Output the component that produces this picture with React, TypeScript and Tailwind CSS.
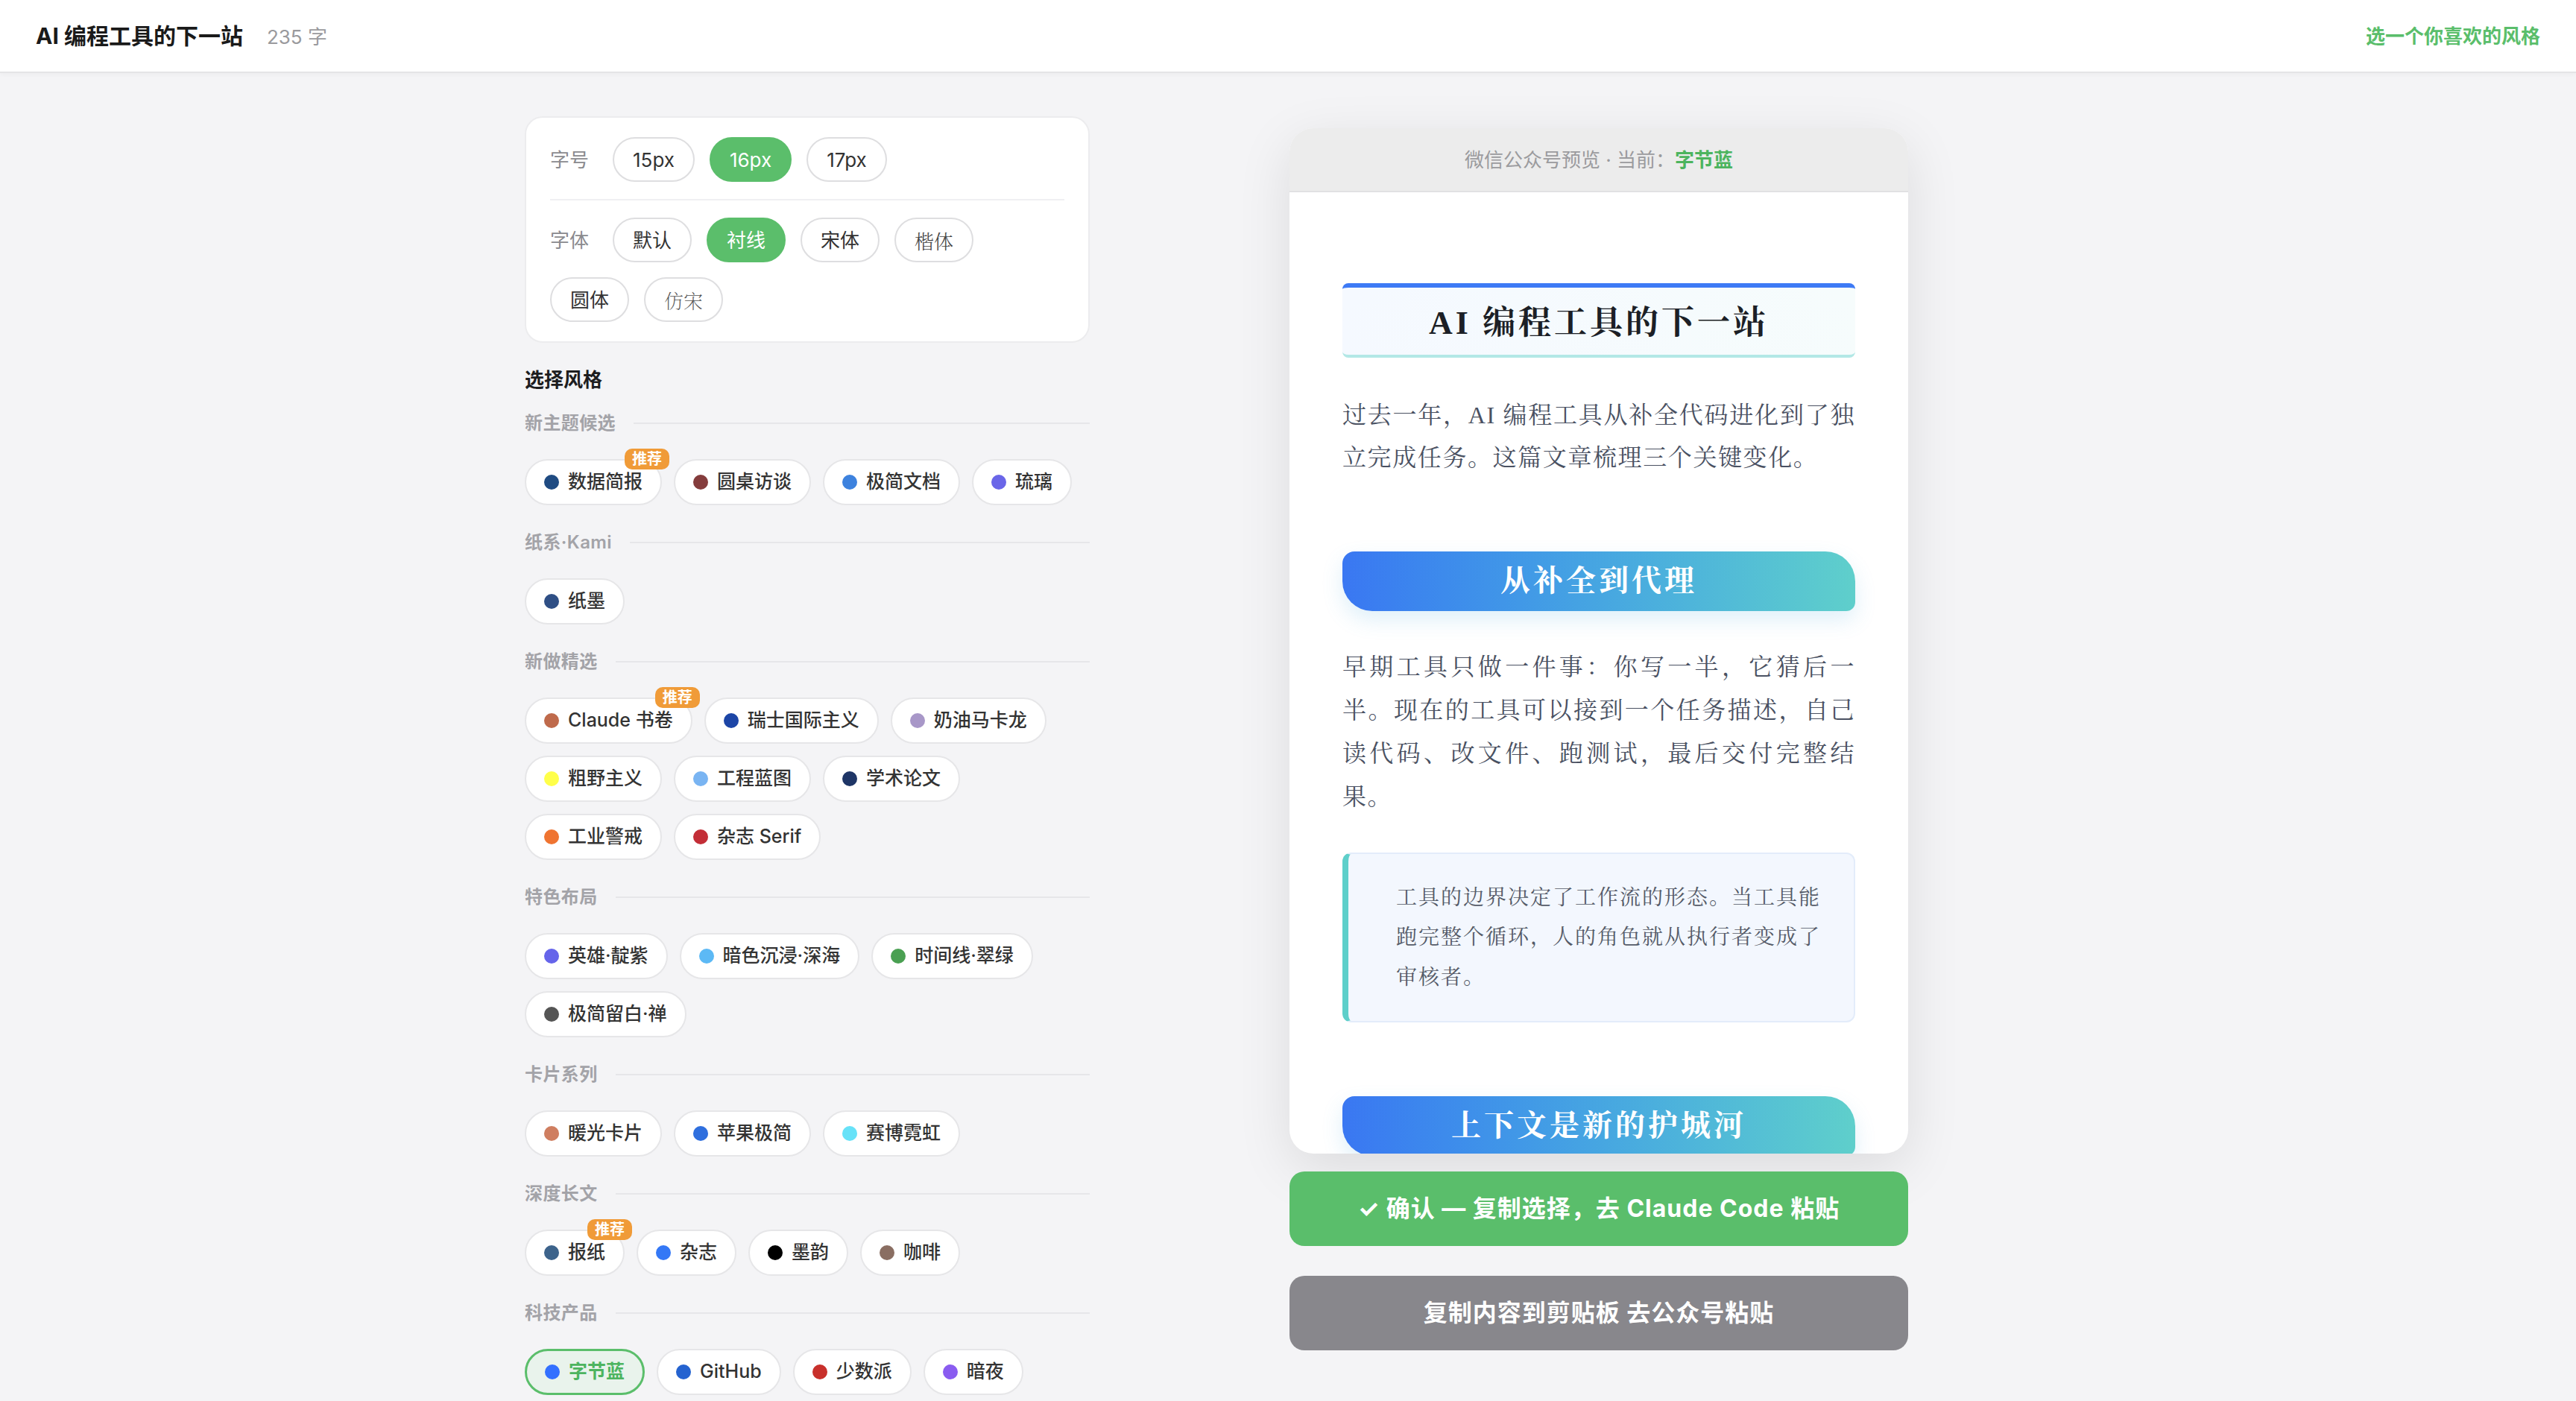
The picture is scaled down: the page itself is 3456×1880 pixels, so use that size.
import clsx from "clsx";

type Theme = { name: string; dot: string; badge?: boolean; active?: boolean };
type Group = { title: string; items: Theme[] };

const groups: Group[] = [
  {
    title: "新主题候选",
    items: [
      { name: "数据简报", dot: "bg-[#1f4b82]", badge: true },
      { name: "圆桌访谈", dot: "bg-[#843c3c]" },
      { name: "极简文档", dot: "bg-[#3d82de]" },
      { name: "琉璃", dot: "bg-[#6a66e8]" },
    ],
  },
  { title: "纸系·Kami", items: [{ name: "纸墨", dot: "bg-[#2f4f85]" }] },
  {
    title: "新做精选",
    items: [
      { name: "Claude 书卷", dot: "bg-[#bf6a4b]", badge: true },
      { name: "瑞士国际主义", dot: "bg-[#1c45a6]" },
      { name: "奶油马卡龙", dot: "bg-[#a897c8]" },
      { name: "粗野主义", dot: "bg-[#ffff4a]" },
      { name: "工程蓝图", dot: "bg-[#79b4f2]" },
      { name: "学术论文", dot: "bg-[#1e3566]" },
      { name: "工业警戒", dot: "bg-[#ef7431]" },
      { name: "杂志 Serif", dot: "bg-[#c32e37]" },
    ],
  },
  {
    title: "特色布局",
    items: [
      { name: "英雄·靛紫", dot: "bg-[#6564ea]" },
      { name: "暗色沉浸·深海", dot: "bg-[#5cb9f5]" },
      { name: "时间线·翠绿", dot: "bg-[#4aa052]" },
      { name: "极简留白·禅", dot: "bg-[#555555]" },
    ],
  },
  {
    title: "卡片系列",
    items: [
      { name: "暖光卡片", dot: "bg-[#cf7e60]" },
      { name: "苹果极简", dot: "bg-[#2f6fde]" },
      { name: "赛博霓虹", dot: "bg-[#67e2f8]" },
    ],
  },
  {
    title: "深度长文",
    items: [
      { name: "报纸", dot: "bg-[#3d638b]", badge: true },
      { name: "杂志", dot: "bg-[#3478f6]" },
      { name: "墨韵", dot: "bg-[#000000]" },
      { name: "咖啡", dot: "bg-[#8a6e62]" },
    ],
  },
  {
    title: "科技产品",
    items: [
      { name: "字节蓝", dot: "bg-[#3370ff]", active: true },
      { name: "GitHub", dot: "bg-[#2563d0]" },
      { name: "少数派", dot: "bg-[#c8302b]" },
      { name: "暗夜", dot: "bg-[#8a5cf0]" },
    ],
  },
];

const sans = "font-['Inter','Noto_Sans_CJK_SC',sans-serif]";
const serif = "font-['Liberation_Serif','Noto_Serif_CJK_SC','Noto_Serif_SC','Noto_Sans_CJK_SC',serif]";

// 字号 / 字体 用的小药丸。楷体・仿宋は書体見本として細めの明朝に
function OptionPill({ label, active, face }: { label: string; active?: boolean; face?: "kai" | "fang" }) {
  return (
    <span
      className={clsx(
        "inline-flex h-[30px] items-center rounded-full border px-[12.5px] text-[13px]",
        active ? "border-[#5bbe6b] bg-[#5bbe6b] text-white" : "border-[#dedee0] bg-white text-[#333]",
        face === "kai" && "font-['AR_PL_UKai_CN','KaiTi','Noto_Serif_CJK_SC',serif] font-light text-[#444]",
        face === "fang" && "font-['FangSong','AR_PL_UMing_CN','Noto_Serif_CJK_SC',serif] text-[12px] font-extralight text-[#555]",
      )}
    >
      {label}
    </span>
  );
}

function ThemePill({ t }: { t: Theme }) {
  return (
    <span
      className={clsx(
        "relative inline-flex h-[31px] items-center gap-1.5 rounded-full px-3 text-[12.5px]",
        t.active
          ? "border-[1.5px] border-[#5bbe6b] bg-[#e9f3ec] font-semibold text-[#4db45f]"
          : "border border-[#e6e6e8] bg-white font-medium text-[#333]",
      )}
    >
      <span className={clsx("size-2.5 rounded-full", t.dot)} />
      {t.name}
      {t.badge && (
        <span className="absolute -right-1.5 -top-2 rounded-[5px] bg-[#f09b38] px-[5px] text-[10px] font-bold leading-[14px] text-white">
          推荐
        </span>
      )}
    </span>
  );
}

function SettingsCard() {
  return (
    <div className="rounded-xl border border-[#ececee] bg-white px-4 py-[13px]">
      <div className="flex flex-wrap items-center gap-x-2.5 gap-y-2.5">
        <span className="w-[32px] text-[13px] text-[#8a8a8e]">字号</span>
        <OptionPill label="15px" />
        <OptionPill label="16px" active />
        <OptionPill label="17px" />
      </div>
      <div className="my-[11.5px] h-px bg-[#f0f0f2]" />
      <div className="flex flex-wrap items-center gap-x-2.5 gap-y-2.5">
        <span className="w-[32px] text-[13px] text-[#8a8a8e]">字体</span>
        <OptionPill label="默认" />
        <OptionPill label="衬线" active />
        <OptionPill label="宋体" />
        <OptionPill label="楷体" face="kai" />
        <OptionPill label="圆体" />
        <OptionPill label="仿宋" face="fang" />
      </div>
    </div>
  );
}

function StylePicker() {
  return (
    <div className="mt-4">
      <h3 className="text-[13px] font-bold leading-[18px] text-[#1d1d1f]">选择风格</h3>
      <div className="mt-3 flex flex-col gap-[17px]">
        {groups.map((g) => (
          <section key={g.title}>
            <div className="flex h-4 items-center gap-3">
              <span className="text-[12px] font-semibold tracking-[0.2px] text-[#a3a3a8]">{g.title}</span>
              <span className="h-px flex-1 bg-[#e6e6e9]" />
            </div>
            <div className="mt-4 flex flex-wrap gap-x-2 gap-y-2">
              {g.items.map((t) => (
                <ThemePill key={t.name} t={t} />
              ))}
            </div>
          </section>
        ))}
      </div>
    </div>
  );
}

function SectionHeading({ children }: { children: string }) {
  return (
    <h2 className="flex h-10 items-center justify-center rounded-[8px_20px_6px_20px] bg-gradient-to-r from-[#3a77f2] to-[#5fcfcb] text-[20px] font-bold tracking-[2px] text-white shadow-[0_6px_14px_rgba(80,170,220,0.18)]">
      {children}
    </h2>
  );
}

function Preview() {
  return (
    <div className="w-[415px]">
      <div className="overflow-hidden rounded-2xl bg-white shadow-[0_10px_36px_rgba(0,0,0,0.10)]">
        <div className="flex h-[43px] items-center justify-center border-b border-[#e1e1e3] bg-[#ececec] text-[13px] text-[#9b9b9e]">
          微信公众号预览 · 当前：<span className="font-semibold text-[#4cb45e]">字节蓝</span>
        </div>
        <div className={clsx("h-[645px] overflow-hidden px-[35.5px] pt-[61px]", serif)}>
          <div className="flex h-[50px] items-center justify-center rounded-[4px] border-t-[3px] border-b-2 border-t-[#3d7af5] border-b-[#b3e8e6] bg-gradient-to-r from-[#f5f9ff] to-[#f6fcfc] pt-[3px]">
            <h1 className="text-[22px] font-bold tracking-[2px] text-[#1c1f26]">AI 编程工具的下一站</h1>
          </div>
          <p className="mt-[24.5px] text-justify text-[16px] leading-[28.5px] tracking-[0.8px] text-[#4a5162]">
            过去一年，AI 编程工具从补全代码进化到了独立完成任务。这篇文章梳理三个关键变化。
          </p>
          <div className="mt-[48.5px]">
            <SectionHeading>从补全到代理</SectionHeading>
          </div>
          <p className="mt-[23px] text-justify text-[16px] leading-[29px] tracking-[0.8px] text-[#4a5162]">
            早期工具只做一件事：你写一半，它猜后一半。现在的工具可以接到一个任务描述，自己读代码、改文件、跑测试，最后交付完整结果。
          </p>
          <blockquote className="mt-[23px] rounded-[6px] border border-l-4 border-[#e3ecfa] border-l-[#5ecfca] bg-[#f3f7fe] py-4 pl-8 pr-5 text-[14px] leading-[26.7px] tracking-[1px] text-[#555b68]">
            工具的边界决定了工作流的形态。当工具能跑完整个循环，人的角色就从执行者变成了审核者。
          </blockquote>
          <div className="mt-[49.5px]">
            <SectionHeading>上下文是新的护城河</SectionHeading>
          </div>
        </div>
      </div>
      <button className="mt-3 flex h-[50px] w-full items-center justify-center rounded-[10px] bg-[#5abe6b] text-[16px] font-bold tracking-[0.5px] text-white">
        ✓ 确认 — 复制选择，去 Claude Code 粘贴
      </button>
      <button className="mt-5 flex h-[50px] w-full items-center justify-center rounded-[10px] bg-[#88878c] text-[16px] font-bold tracking-[0.5px] text-white">
        复制内容到剪贴板 去公众号粘贴
      </button>
    </div>
  );
}

export default function App() {
  // 参照は 2x 解像度なので全体を 2 倍で描く
  return (
    <div className={clsx("min-h-[940px] bg-[#f4f4f6] [zoom:2]", sans)}>
      <header className="flex h-[49px] items-center justify-between border-b border-[#e4e4e6] bg-white px-6 shadow-[0_1px_3px_rgba(0,0,0,0.04)]">
        <div className="flex items-baseline">
          <span className="text-[15px] font-bold text-[#1a1a1a]">AI 编程工具的下一站</span>
          <span className="ml-4 text-[13px] text-[#9a9a9d]">235 字</span>
        </div>
        <span className="text-[13px] font-semibold text-[#5abe6b]">选一个你喜欢的风格</span>
      </header>
      <main className="mx-auto grid max-w-[1024px] grid-cols-[379px_1fr] items-start gap-[38px] pt-[29px]">
        <div>
          <SettingsCard />
          <StylePicker />
        </div>
        <div className="flex justify-center pt-2">
          <Preview />
        </div>
      </main>
    </div>
  );
}
